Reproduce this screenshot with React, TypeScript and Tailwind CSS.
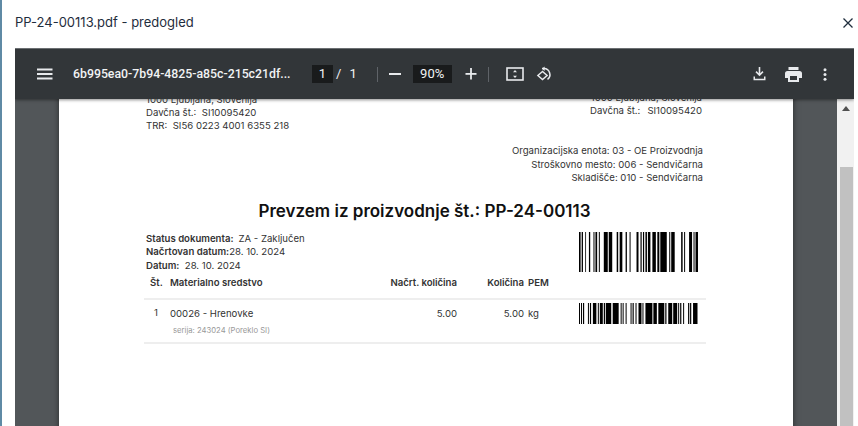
const barsTop: [number, number][] = [
  [0, 1.6], [2.7, 1.3], [6.3, 0.8], [10, 1.3], [14.6, 1], [16.6, 1.7], [20, 1], [25, 4], [30, 3.5],
  [38, 1.5], [41, 2.7], [47, 1.3], [51, 1], [58, 2], [62, 1.2], [64.5, 1.2], [67, 1.5], [69.5, 2.5],
  [74, 3.5], [79, 2], [82, 6.5], [91, 1], [93, 3.5], [103, 1.5], [106, 1], [111, 3], [115.5, 1], [117.5, 2.5],
]

const barsBottom: [number, number][] = [
  [0, 1], [2, 1], [4, 1.2], [9, 1], [11, 1.2], [14, 3.5], [19, 1], [21, 3], [25, 1.2], [27, 5.5],
  [34, 6], [42, 1], [44, 1], [47, 1], [52, 1], [54, 1.2], [57, 1], [60, 3], [64, 1], [67, 7],
  [75, 3.5], [80, 6], [87, 1.2], [90, 4], [95, 4], [100, 1], [102, 1.2], [105, 1], [110, 1.2], [112, 1.2], [115, 4.5],
]

function Barcode({ bars, height }: { bars: [number, number][]; height: number }) {
  return (
    <svg width="119" height={height} viewBox={`0 0 120 ${height}`} preserveAspectRatio="none" className="block">
      {bars.map(([x, w]) => (
        <rect key={x} x={x} y="0" width={w} height={height} fill="#000" />
      ))}
    </svg>
  )
}

function Divider() {
  return <div className="w-px h-[15px] bg-[#5f6368]" />
}

function Toolbar() {
  return (
    <div className="relative z-10 flex items-center h-[51px] bg-[#323639] border-t border-[#6b6f72] shadow-[0_1px_3px_rgba(0,0,0,0.45)] text-[#f1f3f4] font-['Roboto',sans-serif] shrink-0">
      {/* menu */}
      <svg width="16" height="12" viewBox="0 0 16 12" className="ml-[22px]" fill="#e8eaed">
        <rect x="0" y="0.5" width="15.5" height="2" />
        <rect x="0" y="5" width="15.5" height="2" />
        <rect x="0" y="9.5" width="15.5" height="2" />
      </svg>
      <span className="ml-[20px] w-[218px] text-[12.3px] font-medium whitespace-nowrap">6b995ea0-7b94-4825-a85c-215c21df...</span>
      <span className="ml-[21px] w-[21px] h-[18px] bg-[#191b1c] flex items-center justify-center text-[13px]">1</span>
      <span className="ml-[3px] text-[13px]">/</span>
      <span className="ml-[8px] text-[13px]">1</span>
      <div className="ml-[20px]"><Divider /></div>
      <div className="ml-[11px] w-[12px] h-[2px] bg-[#e8eaed]" />
      <span className="ml-[12px] w-[39px] h-[18px] bg-[#191b1c] flex items-center justify-center text-[13px]">90%</span>
      <svg width="12" height="12" viewBox="0 0 12 12" className="ml-[13px]" fill="#e8eaed">
        <rect x="0.5" y="5" width="11" height="1.8" />
        <rect x="5.1" y="0" width="1.8" height="11.5" />
      </svg>
      <div className="ml-[11px]"><Divider /></div>
      {/* fit to page */}
      <svg width="18" height="14" viewBox="0 0 18 14" className="ml-[17px]" fill="none">
        <rect x="1" y="1" width="16" height="12" stroke="#e8eaed" strokeWidth="1.6" />
        <path d="M9 3l2 2.2H7zM9 11L7 8.8h4z" fill="#e8eaed" />
      </svg>
      {/* rotate */}
      <svg width="17" height="17" viewBox="0 0 17 17" className="ml-[11px]" fill="none" stroke="#e8eaed" strokeWidth="1.5">
        <path d="M7.5 5.5l-4.6 4 4.6 4 4.6-4z" />
        <path d="M7 2.6h2a6 6 0 0 1 3.5 10.8" />
        <path d="M9.6 0.4L7 2.7l2.6 2.3" fill="#e8eaed" stroke="none" />
      </svg>
      <div className="flex-1" />
      {/* download */}
      <svg width="13" height="14" viewBox="0 0 13 14" fill="#e8eaed">
        <path d="M5.7 0h1.6v6.2l2.1-2.1 1.1 1.1-4 4-4-4 1.1-1.1 2.1 2.1z" />
        <path d="M0.5 9.5h1.5v2.2h9V9.5h1.5v3.7H0.5z" />
      </svg>
      {/* print */}
      <svg width="17" height="15" viewBox="0 0 17 15" className="ml-[19px]" fill="#e8eaed">
        <path d="M3.5 0h10v3h-10z" />
        <path d="M2.5 4h12A2.5 2.5 0 0 1 17 6.5V11h-3v4H3v-4H0V6.5A2.5 2.5 0 0 1 2.5 4zM5 9v4h7V9z" fillRule="evenodd" />
      </svg>
      <svg width="4" height="13" viewBox="0 0 4 13" className="ml-[21px] mr-[27px]" fill="#e8eaed">
        <circle cx="2" cy="1.7" r="1.5" />
        <circle cx="2" cy="6.5" r="1.5" />
        <circle cx="2" cy="11.3" r="1.5" />
      </svg>
    </div>
  )
}

function PdfPage() {
  return (
    <div className="ml-[44px] w-[734px] shrink-0 bg-white -mt-[6px] px-[87px] text-[9.6px] leading-[13px] text-[#333333] font-['Inter',sans-serif] shadow-[0_0_6px_rgba(0,0,0,0.5)]">
      <div className="flex justify-between">
        <div>
          <p>1000 Ljubljana, Slovenija</p>
          <p>Davčna št.:&nbsp; SI10095420</p>
          <p>TRR:&nbsp; SI56 0223 4001 6355 218</p>
        </div>
        <div className="text-right pr-[4px] -mt-[2px]">
          <p>1000 Ljubljana, Slovenija</p>
          <p>Davčna št.:<span className="ml-[7px]">SI10095420</span></p>
        </div>
      </div>
      <div className="mt-[12px] text-right pr-[3px] leading-[13.5px]">
        <p>Organizacijska enota: 03 - OE Proizvodnja</p>
        <p>Stroškovno mesto: 006 - Sendvičarna</p>
        <p>Skladišče: 010 - Sendvičarna</p>
      </div>
      <h1 className="mt-[14px] pr-[3px] text-center text-[17px] leading-[24px] font-semibold text-[#111111]">Prevzem iz proizvodnje št.: PP-24-00113</h1>
      <div className="flex justify-between mt-[9px]">
        <div className="leading-[13.5px]">
          <p><b className="font-semibold">Status dokumenta:</b><span className="ml-[5px]">ZA - Zaključen</span></p>
          <p><b className="font-semibold">Načrtovan datum:</b>28. 10. 2024</p>
          <p><b className="font-semibold">Datum:</b>&nbsp; 28. 10. 2024</p>
        </div>
        <div className="mr-[8px]">
          <Barcode bars={barsTop} height={40} />
        </div>
      </div>
      <div className="mt-[1px] h-[18px] font-semibold flex items-center">
        <span className="w-[24px] pl-[4px]">Št.</span>
        <span className="w-[200px]">Materialno sredstvo</span>
        <span className="w-[87px] text-right">Načrt. količina</span>
        <span className="w-[67px] text-right">Količina</span>
        <span className="ml-[4px]">PEM</span>
      </div>
      <div className="mt-[7px] -ml-[2px] pl-[2px] border-y-2 border-[#eeeeee] pt-[5px] pb-[6px] flex justify-between">
        <div className="flex-1">
          <div className="flex items-center">
            <span className="w-[24px] h-[16px] leading-[16px] pl-[8px]">1</span>
            <span className="w-[200px]">00026 - Hrenovke</span>
            <span className="w-[87px] text-right">5.00</span>
            <span className="w-[67px] text-right">5.00</span>
            <span className="ml-[4px]">kg</span>
          </div>
          <p className="pl-[27px] mt-[5px] text-[7.7px] leading-[10px] text-[#999999]">serija: 243024 (Poreklo SI)</p>
        </div>
        <div className="mr-[8px] -mt-[2px] h-[21px]">
          <Barcode bars={barsBottom} height={21} />
        </div>
      </div>
      <div className="h-[200px]" />
    </div>
  )
}

export default function App() {
  return (
    <div className="w-[858px] h-[426px] overflow-hidden bg-white border-l-2 border-[#5f8aa5] flex flex-col font-['Inter',sans-serif]">
      <div className="flex items-center justify-between h-[48px] shrink-0 pl-[13px] pr-[5px] pb-[3px]">
        <span className="text-[13px] text-[#1f2d3d]">PP-24-00113.pdf - predogled</span>
        <svg width="10" height="10" viewBox="0 0 10 10" stroke="#1f2d3d" strokeWidth="1.3" fill="none">
          <path d="M0.5 0.5l9 9M9.5 0.5l-9 9" />
        </svg>
      </div>
      <div className="ml-[13px] w-[839px] flex-1 min-h-0 flex flex-col overflow-hidden">
        <Toolbar />
        <div className="flex flex-1 min-h-0 bg-[#525659] overflow-hidden">
          <div className="flex-1 min-w-0 overflow-hidden">
            <PdfPage />
          </div>
          <div className="w-[17px] shrink-0 bg-[#f1f1f1] flex flex-col items-center pl-[1px]">
            <div className="mt-[7px] w-0 h-0 border-x-[4px] border-x-transparent border-b-[5px] border-b-[#505050]" />
            <div className="mt-[56px] w-[13px] flex-1 bg-[#c1c1c1]" />
          </div>
        </div>
      </div>
    </div>
  )
}
